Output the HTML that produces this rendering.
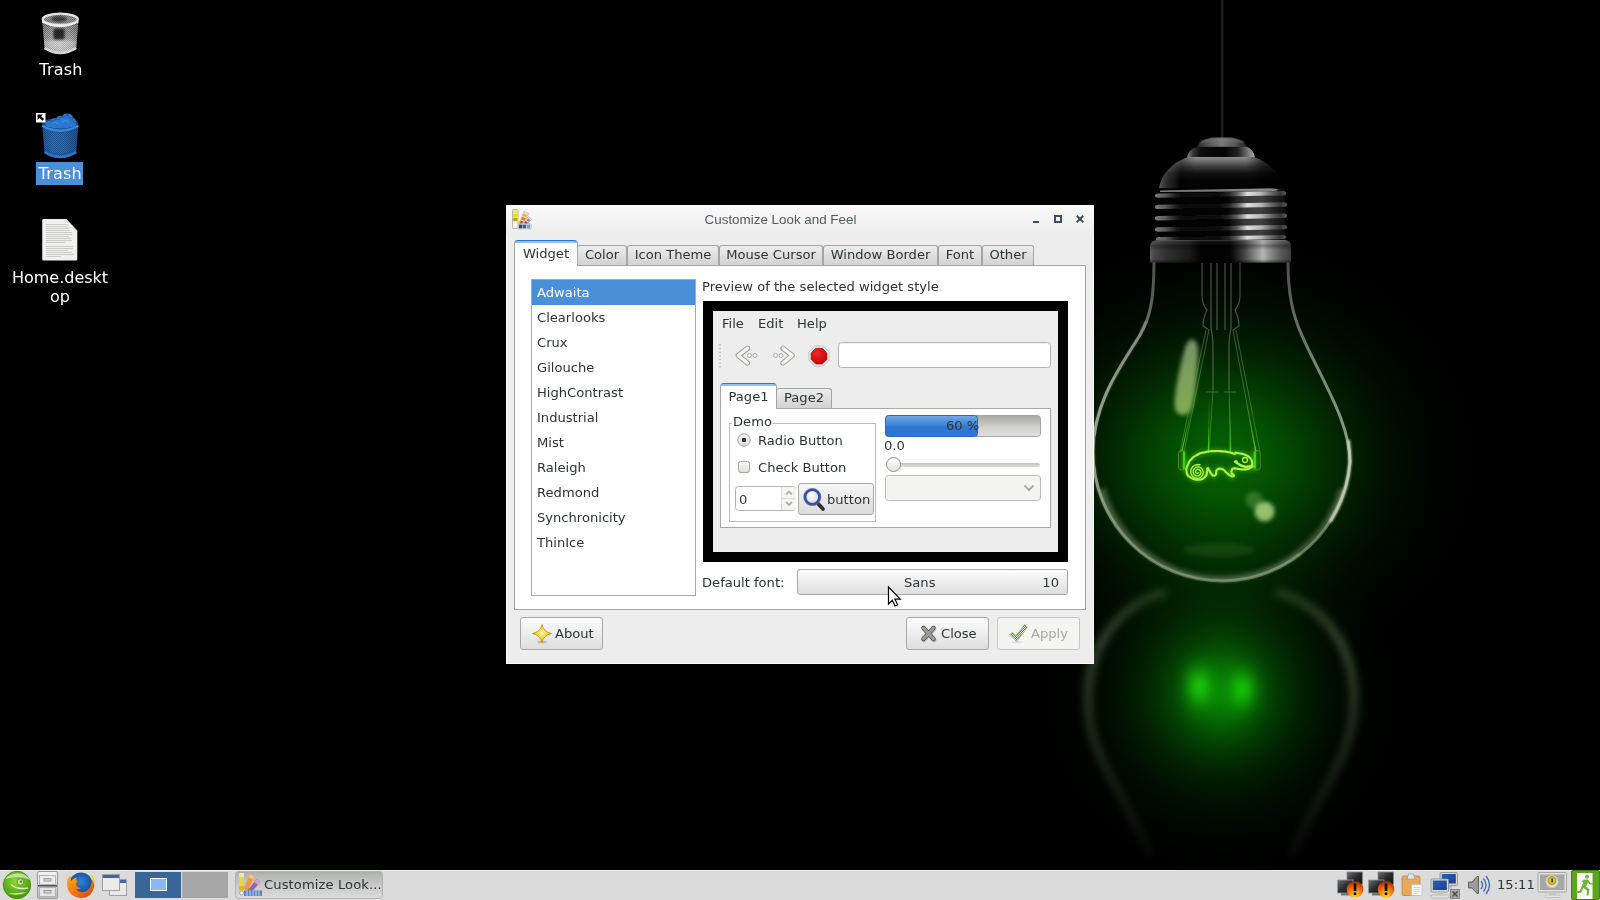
<!DOCTYPE html>
<html lang="en">
<head>
<meta charset="utf-8">
<title>Customize Look and Feel</title>
<style>
html,body{margin:0;padding:0;background:#000;}
body{width:1600px;height:900px;overflow:hidden;position:relative;font-family:"DejaVu Sans","Liberation Sans",sans-serif;font-size:13.1px;color:#2e3436;}
.abs{position:absolute;}
#wall{position:absolute;left:0;top:0;width:1600px;height:900px;}
.dlabel{will-change:transform;position:absolute;color:#fff;font-size:16px;text-align:center;line-height:19px;white-space:nowrap;}
/* window */
#win{will-change:transform;position:absolute;left:506px;top:205px;width:588px;height:459px;background:#ededed;box-sizing:border-box;box-shadow:inset 1px 1px 0 #fbfbfb,inset -1px -1px 0 #f8f8f8;}
#title{position:absolute;left:0;top:0;width:588px;height:29px;background:linear-gradient(#fafafa,#ededed);}
#title .t{position:absolute;left:2px;width:545px;top:7px;text-align:center;font-family:"Liberation Sans","DejaVu Sans",sans-serif;font-size:13.4px;color:#4f5d62;line-height:16px;}
.tab{position:absolute;top:40px;height:20px;box-sizing:border-box;border:1px solid #a2a6a2;border-bottom:none;border-radius:3px 3px 0 0;background:linear-gradient(#ededed,#d2d2d2);line-height:18px;text-align:center;white-space:nowrap;}
.tab.act{top:35px;height:26px;background:linear-gradient(#93c1f3 0,#93c1f3 2px,#fff 2px);border-color:#a2a6a2;border-top:1px solid #2a76d2;line-height:26px;z-index:2;border-radius:4px 4px 0 0;}
#pane{position:absolute;left:8px;top:60px;width:572px;height:345px;background:#fff;border:1px solid #a2a6a2;box-sizing:border-box;}
#list{position:absolute;left:25px;top:74px;width:165px;height:317px;border:1px solid #a8a8a8;background:#fff;box-sizing:border-box;}
#list div{height:25px;line-height:25px;padding-left:5px;white-space:nowrap;}
#list div.sel{background:#4a90d9;color:#fff;}
.btn{position:absolute;box-sizing:border-box;border:1px solid #a8a8a8;border-radius:3px;background:linear-gradient(#fcfcfc,#dedede);white-space:nowrap;}
.txt{position:absolute;white-space:nowrap;line-height:16px;}
/* preview */
#pv{position:absolute;left:197px;top:96px;width:365px;height:261px;background:#000;}
#pvi{position:absolute;left:10px;top:10px;width:345px;height:241px;background:#ededed;}
/* panel */
#panel{will-change:transform;position:absolute;left:0;top:870px;width:1600px;height:30px;background:#dbdbdb;box-shadow:inset 0 1px 0 #e9e9e9;}
</style>
</head>
<body>
<!--WALL-->
<svg id="wall" width="1600" height="900" viewBox="0 0 1600 900">
<defs>
 <radialGradient id="gExt">
  <stop offset="0.0" stop-color="#055f03"/>
  <stop offset="0.1" stop-color="#055b03"/>
  <stop offset="0.2" stop-color="#044f02"/>
  <stop offset="0.3" stop-color="#033f02"/>
  <stop offset="0.4" stop-color="#022e01"/>
  <stop offset="0.5" stop-color="#021f01"/>
  <stop offset="0.6" stop-color="#011301"/>
  <stop offset="0.7" stop-color="#010a00"/>
  <stop offset="0.8" stop-color="#000500"/>
  <stop offset="0.9" stop-color="#000200"/>
  <stop offset="1.0" stop-color="#000000"/>
 </radialGradient>
 <linearGradient id="gEdge" x1="0" y1="262" x2="0" y2="581" gradientUnits="userSpaceOnUse">
  <stop offset="0" stop-color="#8a8f88" stop-opacity="0.55"/>
  <stop offset="0.3" stop-color="#9aa593" stop-opacity="0.75"/>
  <stop offset="0.6" stop-color="#aebd9f" stop-opacity="0.8"/>
  <stop offset="1" stop-color="#7f9a6c" stop-opacity="0.55"/>
 </linearGradient>
 <linearGradient id="gCap" x1="1150" y1="0" x2="1291" y2="0" gradientUnits="userSpaceOnUse">
  <stop offset="0" stop-color="#5e5e5e"/>
  <stop offset="0.03" stop-color="#464646"/>
  <stop offset="0.12" stop-color="#303030"/>
  <stop offset="0.28" stop-color="#1a1a1a"/>
  <stop offset="0.36" stop-color="#030303"/>
  <stop offset="0.57" stop-color="#030303"/>
  <stop offset="0.66" stop-color="#3c3c3c"/>
  <stop offset="0.75" stop-color="#8c8c8c"/>
  <stop offset="0.8" stop-color="#b6b6b6"/>
  <stop offset="0.85" stop-color="#8c8c8c"/>
  <stop offset="0.93" stop-color="#585858"/>
  <stop offset="1" stop-color="#3c3c3c"/>
 </linearGradient>
 <linearGradient id="gDome" x1="0" y1="157" x2="0" y2="190" gradientUnits="userSpaceOnUse">
  <stop offset="0" stop-color="#8e8e8e"/>
  <stop offset="0.12" stop-color="#707070"/>
  <stop offset="0.3" stop-color="#3a3a3a"/>
  <stop offset="0.5" stop-color="#121212"/>
  <stop offset="0.7" stop-color="#040404"/>
  <stop offset="1" stop-color="#020202"/>
 </linearGradient>
 <linearGradient id="gThr" x1="1155" y1="0" x2="1287" y2="0" gradientUnits="userSpaceOnUse">
  <stop offset="0" stop-color="#7a7a7a"/>
  <stop offset="0.08" stop-color="#585858"/>
  <stop offset="0.16" stop-color="#1c1c1c"/>
  <stop offset="0.22" stop-color="#080808"/>
  <stop offset="0.48" stop-color="#0a0a0a"/>
  <stop offset="0.56" stop-color="#262626"/>
  <stop offset="0.63" stop-color="#6a6a6a"/>
  <stop offset="0.7" stop-color="#dedede"/>
  <stop offset="0.8" stop-color="#b8b8b8"/>
  <stop offset="0.88" stop-color="#6a6a6a"/>
  <stop offset="0.95" stop-color="#383838"/>
  <stop offset="1" stop-color="#5a5a5a"/>
 </linearGradient>
 <linearGradient id="gThrB" x1="1155" y1="0" x2="1287" y2="0" gradientUnits="userSpaceOnUse">
  <stop offset="0.55" stop-color="#030303"/>
  <stop offset="0.68" stop-color="#3a3a3a"/>
  <stop offset="0.8" stop-color="#404040"/>
  <stop offset="0.92" stop-color="#1c1c1c"/>
  <stop offset="1" stop-color="#0a0a0a"/>
 </linearGradient>
 <radialGradient id="gRef">
  <stop offset="0.0" stop-color="#0dff08" stop-opacity="0.3059"/>
  <stop offset="0.1" stop-color="#0dff08" stop-opacity="0.2924"/>
  <stop offset="0.2" stop-color="#0dff08" stop-opacity="0.2555"/>
  <stop offset="0.3" stop-color="#0dff08" stop-opacity="0.2040"/>
  <stop offset="0.4" stop-color="#0dff08" stop-opacity="0.1489"/>
  <stop offset="0.5" stop-color="#0dff08" stop-opacity="0.0993"/>
  <stop offset="0.6" stop-color="#0dff08" stop-opacity="0.0605"/>
  <stop offset="0.7" stop-color="#0dff08" stop-opacity="0.0337"/>
  <stop offset="0.8" stop-color="#0dff08" stop-opacity="0.0172"/>
  <stop offset="0.9" stop-color="#0dff08" stop-opacity="0.0080"/>
  <stop offset="1.0" stop-color="#0dff08" stop-opacity="0.0000"/>
 </radialGradient>
 <radialGradient id="gRefM">
  <stop offset="0.0" stop-color="#0dff08" stop-opacity="0.2157"/>
  <stop offset="0.1" stop-color="#0dff08" stop-opacity="0.2062"/>
  <stop offset="0.2" stop-color="#0dff08" stop-opacity="0.1802"/>
  <stop offset="0.3" stop-color="#0dff08" stop-opacity="0.1439"/>
  <stop offset="0.4" stop-color="#0dff08" stop-opacity="0.1050"/>
  <stop offset="0.5" stop-color="#0dff08" stop-opacity="0.0700"/>
  <stop offset="0.6" stop-color="#0dff08" stop-opacity="0.0427"/>
  <stop offset="0.7" stop-color="#0dff08" stop-opacity="0.0238"/>
  <stop offset="0.8" stop-color="#0dff08" stop-opacity="0.0121"/>
  <stop offset="0.9" stop-color="#0dff08" stop-opacity="0.0056"/>
  <stop offset="1.0" stop-color="#0dff08" stop-opacity="0.0000"/>
 </radialGradient>
 <radialGradient id="gBlob">
  <stop offset="0.0" stop-color="#38ff10" stop-opacity="0.3137"/>
  <stop offset="0.1" stop-color="#38ff10" stop-opacity="0.2999"/>
  <stop offset="0.2" stop-color="#38ff10" stop-opacity="0.2620"/>
  <stop offset="0.3" stop-color="#38ff10" stop-opacity="0.2092"/>
  <stop offset="0.4" stop-color="#38ff10" stop-opacity="0.1527"/>
  <stop offset="0.5" stop-color="#38ff10" stop-opacity="0.1019"/>
  <stop offset="0.6" stop-color="#38ff10" stop-opacity="0.0621"/>
  <stop offset="0.7" stop-color="#38ff10" stop-opacity="0.0346"/>
  <stop offset="0.8" stop-color="#38ff10" stop-opacity="0.0176"/>
  <stop offset="0.9" stop-color="#38ff10" stop-opacity="0.0082"/>
  <stop offset="1.0" stop-color="#38ff10" stop-opacity="0.0000"/>
 </radialGradient>
 <linearGradient id="gNub" x1="1197" y1="0" x2="1247" y2="0" gradientUnits="userSpaceOnUse">
  <stop offset="0" stop-color="#2a2a2a"/><stop offset="0.25" stop-color="#5a5a5a"/><stop offset="0.5" stop-color="#787878"/><stop offset="0.75" stop-color="#585858"/><stop offset="1" stop-color="#1c1c1c"/>
 </linearGradient>
 <linearGradient id="gCap2" x1="1187" y1="0" x2="1255" y2="0" gradientUnits="userSpaceOnUse">
  <stop offset="0" stop-color="#8a8a8a"/><stop offset="0.08" stop-color="#3a3a3a"/><stop offset="0.2" stop-color="#0c0c0c"/><stop offset="0.55" stop-color="#050505"/><stop offset="0.75" stop-color="#222"/><stop offset="0.9" stop-color="#777"/><stop offset="1" stop-color="#b0b0b0"/>
 </linearGradient>
 <linearGradient id="gDomeH" x1="1158" y1="0" x2="1284" y2="0" gradientUnits="userSpaceOnUse">
  <stop offset="0" stop-color="#999" stop-opacity="0.6"/><stop offset="0.08" stop-color="#777" stop-opacity="0.3"/><stop offset="0.18" stop-color="#000" stop-opacity="0.35"/><stop offset="0.3" stop-color="#000" stop-opacity="0"/><stop offset="0.7" stop-color="#000" stop-opacity="0"/><stop offset="0.82" stop-color="#000" stop-opacity="0.55"/><stop offset="1" stop-color="#000" stop-opacity="0.85"/>
 </linearGradient>
 <linearGradient id="gColV" x1="0" y1="240" x2="0" y2="262.500" gradientUnits="userSpaceOnUse">
  <stop offset="0" stop-color="#aaa" stop-opacity="0.35"/><stop offset="0.1" stop-color="#555" stop-opacity="0.1"/><stop offset="0.25" stop-color="#000" stop-opacity="0.3"/><stop offset="0.45" stop-color="#000" stop-opacity="0"/><stop offset="0.85" stop-color="#000" stop-opacity="0"/><stop offset="1" stop-color="#000" stop-opacity="0.5"/>
 </linearGradient>
 <linearGradient id="gArc" x1="0" y1="590" x2="0" y2="860" gradientUnits="userSpaceOnUse"><stop offset="0" stop-color="#7e9a6c" stop-opacity="0.3"/><stop offset="0.2" stop-color="#7e9a6c" stop-opacity="0.5"/><stop offset="0.55" stop-color="#7e9a6c" stop-opacity="0.3"/><stop offset="1" stop-color="#7e9a6c" stop-opacity="0.05"/></linearGradient>
 <filter id="b05" x="-10%" y="-50%" width="120%" height="200%"><feGaussianBlur stdDeviation="0.6"/></filter>
 <linearGradient id="gHi" x1="0" y1="339" x2="0" y2="416" gradientUnits="userSpaceOnUse"><stop offset="0" stop-color="#80a070" stop-opacity="0.9"/><stop offset="0.5" stop-color="#84a660" stop-opacity="0.95"/><stop offset="1" stop-color="#86ae54" stop-opacity="0.97"/></linearGradient>
 <linearGradient id="gWire" x1="0" y1="398" x2="0" y2="452" gradientUnits="userSpaceOnUse"><stop offset="0" stop-color="#4ed010" stop-opacity="0"/><stop offset="0.6" stop-color="#4ed010" stop-opacity="0.45"/><stop offset="1" stop-color="#58e018" stop-opacity="0.95"/></linearGradient>
 <filter id="b1" x="-50%" y="-50%" width="200%" height="200%"><feGaussianBlur stdDeviation="1"/></filter>
 <filter id="b2" x="-50%" y="-50%" width="200%" height="200%"><feGaussianBlur stdDeviation="2.2"/></filter>
 <filter id="b4" x="-50%" y="-50%" width="200%" height="200%"><feGaussianBlur stdDeviation="4"/></filter>
 <filter id="b5" x="-50%" y="-50%" width="200%" height="200%"><feGaussianBlur stdDeviation="5"/></filter>
 <filter id="b12" filterUnits="userSpaceOnUse" x="1000" y="180" width="460" height="480"><feGaussianBlur stdDeviation="13"/></filter>
 <filter id="b7" x="-100%" y="-100%" width="300%" height="300%"><feGaussianBlur stdDeviation="7.5"/></filter>
 <filter id="b8" x="-50%" y="-50%" width="200%" height="200%"><feGaussianBlur stdDeviation="8"/></filter>
 <clipPath id="cBulb"><path d="M1154,262 C1154,300 1150,318 1140,335 C1125,360 1093,400 1093,452 A129,129 0 0 0 1222,581 A129,129 0 0 0 1350,462 C1350,422 1322,380.600 1302,335.600 C1293,315.600 1288,295 1288,262 Z"/></clipPath>
</defs>
<rect width="1600" height="900" fill="#000"/>
<!-- outer glow -->
<ellipse cx="1225" cy="460" rx="255" ry="228" fill="url(#gExt)"/>
<!-- reflection glow -->
<ellipse cx="1221" cy="695" rx="180" ry="180" fill="url(#gRef)" style="mix-blend-mode:plus-lighter"/>
<ellipse cx="1221" cy="692" rx="84" ry="84" fill="url(#gRefM)" style="mix-blend-mode:plus-lighter"/>
<ellipse cx="1198" cy="686" rx="27" ry="39" fill="url(#gBlob)" style="mix-blend-mode:plus-lighter"/>
<ellipse cx="1243.500" cy="689" rx="27" ry="39" fill="url(#gBlob)" fill-opacity="0.92" style="mix-blend-mode:plus-lighter"/>
<path d="M1166,592 C1122,603 1088,642 1088,700 C1088,760 1125,790 1150,856" fill="none" stroke="url(#gArc)" stroke-width="7" filter="url(#b4)"/>
<path d="M1276,592 C1320,603 1354,642 1354,700 C1354,760 1317,790 1292,856" fill="none" stroke="url(#gArc)" stroke-width="7" filter="url(#b4)"/>

<!-- wire -->
<rect x="1220.800" y="0" width="2.800" height="139" fill="#1c1c1c"/>
<!-- bulb glass -->

<path d="M1154,262 C1154,300 1150,318 1140,335 C1125,360 1093,400 1093,452 A129,129 0 0 0 1222,581 A129,129 0 0 0 1350,462 C1350,422 1322,380.600 1302,335.600 C1293,315.600 1288,295 1288,262" fill="none" stroke="url(#gEdge)" stroke-width="3"/>
<path d="M1146,321 C1143,328 1141,332 1140,335 C1125,360 1098,398 1094,436" fill="none" stroke="#c0c8b8" stroke-opacity="0.5" stroke-width="2" filter="url(#b1)"/>
<g clip-path="url(#cBulb)"><path d="M1098,490 A129,129 0 0 0 1346,490" fill="none" stroke="#8fa482" stroke-opacity="0.42" stroke-width="15" filter="url(#b2)"/></g>
<path d="M1348.500,440 Q1350,452 1350,462 A129,129 0 0 1 1330,522" fill="none" stroke="#dce4c8" stroke-opacity="0.75" stroke-width="3.600" filter="url(#b1)"/>
<path d="M1093.300,438 L1093,452 A129,129 0 0 0 1222,581 A129,129 0 0 0 1300,554" fill="none" stroke="#b4c4a4" stroke-opacity="0.35" stroke-width="3" filter="url(#b1)"/>
<!--BULBDETAIL-->
<!-- glass highlights -->
<path d="M1192,339.500 C1197.500,339.500 1199,348 1197.500,364 C1196,384 1195,400 1191,410 C1187,417.500 1176.500,416.500 1175,408 C1173.500,396 1180,366 1184.500,350 C1186.500,343 1189,339.500 1192,339.500 Z" fill="url(#gHi)" filter="url(#b2)"/>
<circle cx="1254" cy="500" r="8.500" fill="#8fc070" fill-opacity="0.32" filter="url(#b2)"/>
<circle cx="1264.500" cy="511.500" r="10" fill="#a8d080" fill-opacity="0.88" filter="url(#b2)"/>
<ellipse cx="1219" cy="550" rx="36" ry="7" fill="#4f8a3a" fill-opacity="0.2" filter="url(#b2)"/>
<!-- stem / filament supports -->
<g fill="none" stroke="#7f8f78" stroke-opacity="0.55" stroke-width="1.2">
 <path d="M1202,263 L1202,296 Q1202,304 1207,310 Q1203,318 1203,326 L1209,330"/>
 <path d="M1240,263 L1240,296 Q1240,304 1235,310 Q1239,318 1239,326 L1233,330"/>
 <path d="M1211,263 L1211,328 Q1213,336 1213,350 L1213,390"/>
 <path d="M1231,263 L1231,328 Q1229,336 1229,350 L1229,390"/>
 <path d="M1217,263 L1217,330"/><path d="M1225,263 L1225,330"/>
</g>
<g fill="none" stroke="#6aa44e" stroke-opacity="0.5" stroke-width="1">
 <path d="M1209,330 L1184,452"/><path d="M1206,330 L1180,452"/>
 <path d="M1233,330 L1256,452"/><path d="M1236,330 L1260,452"/>
 <path d="M1213,390 L1209,452"/><path d="M1229,390 L1231,452"/>
 <path d="M1206,392 h12 M1224,392 h12"/>
</g>
<!-- chameleon -->
<g fill="none" stroke-linecap="round" stroke-linejoin="round">
 <g stroke="#5ce010" stroke-opacity="0.42" stroke-width="4.500" filter="url(#b2)">
  <path d="M1186.56,471.88 C1185.73,467.50 1186.56,468.54 1188.12,464.38 C1189.69,460.21 1188.33,462.50 1191.25,459.38 C1194.17,456.25 1192.29,457.40 1196.88,455.00 C1201.46,452.60 1199.38,453.48 1205.00,452.19 C1210.62,450.90 1207.71,451.40 1213.75,451.12 C1219.79,450.85 1217.71,450.92 1223.12,451.38 C1228.54,451.83 1226.15,451.71 1230.00,452.50 C1233.85,453.29 1232.81,453.71 1234.69,453.75 C1236.56,453.79 1234.79,452.88 1235.62,452.62 C1236.46,452.38 1235.10,452.62 1237.19,453.00 C1239.27,453.38 1238.65,452.88 1241.88,453.75 C1245.10,454.62 1243.96,453.96 1246.88,455.62 C1249.79,457.29 1248.85,456.46 1250.62,458.75 C1252.40,461.04 1251.77,460.21 1252.19,462.50 C1252.60,464.79 1252.60,463.75 1251.88,465.62 C1251.15,467.50 1252.29,466.88 1250.00,468.12 C1247.71,469.38 1248.75,469.06 1245.00,469.38 C1241.25,469.69 1242.50,469.38 1238.75,469.06 C1235.00,468.75 1236.04,468.12 1233.75,468.44 C1231.46,468.75 1232.60,468.44 1231.88,470.00 C1231.15,471.56 1230.94,471.46 1231.56,473.12 C1232.19,474.79 1233.44,473.92 1233.75,475.00 C1234.06,476.08 1233.96,476.38 1232.50,476.38 C1231.04,476.38 1231.46,476.29 1229.38,475.00 C1227.29,473.71 1228.12,474.17 1226.25,472.50 C1224.38,470.83 1225.62,471.25 1223.75,470.00 C1221.88,468.75 1222.71,468.96 1220.62,468.75 C1218.54,468.54 1218.96,468.33 1217.50,469.38 C1216.04,470.42 1216.77,470.21 1216.25,471.88 C1215.73,473.54 1216.77,473.08 1215.94,474.38 C1215.10,475.67 1215.31,475.96 1213.75,475.75 C1212.19,475.54 1212.71,475.46 1211.25,473.75 C1209.79,472.04 1210.62,472.50 1209.38,470.62 C1208.12,468.75 1208.29,467.71 1207.50,468.12 C1206.71,468.54 1207.83,468.96 1207.00,471.88 C1206.17,474.79 1207.96,474.27 1205.00,476.88 C1202.04,479.48 1202.92,479.48 1198.12,479.69 C1193.33,479.90 1194.48,480.10 1190.62,477.50 C1186.77,474.90 1187.40,476.25 1186.56,471.88 Z"/>
  <circle cx="1197.6" cy="472.0" r="4.500"/>
  <path d="M1183.800,452 v17 M1254.800,452 v17"/>
 </g>
 <g stroke="url(#gWire)" stroke-width="1.200">
  <path d="M1209.300,400 L1208.400,452.300 M1229.600,400 L1230.300,452.600"/>
  <path d="M1193.500,400 L1182,450.600 M1246,400 L1255.600,450.600"/>
 </g>
 <g stroke="#aef444" stroke-width="2.100">
  <path d="M1186.56,471.88 C1185.73,467.50 1186.56,468.54 1188.12,464.38 C1189.69,460.21 1188.33,462.50 1191.25,459.38 C1194.17,456.25 1192.29,457.40 1196.88,455.00 C1201.46,452.60 1199.38,453.48 1205.00,452.19 C1210.62,450.90 1207.71,451.40 1213.75,451.12 C1219.79,450.85 1217.71,450.92 1223.12,451.38 C1228.54,451.83 1226.15,451.71 1230.00,452.50 C1233.85,453.29 1232.81,453.71 1234.69,453.75 C1236.56,453.79 1234.79,452.88 1235.62,452.62 C1236.46,452.38 1235.10,452.62 1237.19,453.00 C1239.27,453.38 1238.65,452.88 1241.88,453.75 C1245.10,454.62 1243.96,453.96 1246.88,455.62 C1249.79,457.29 1248.85,456.46 1250.62,458.75 C1252.40,461.04 1251.77,460.21 1252.19,462.50 C1252.60,464.79 1252.60,463.75 1251.88,465.62 C1251.15,467.50 1252.29,466.88 1250.00,468.12 C1247.71,469.38 1248.75,469.06 1245.00,469.38 C1241.25,469.69 1242.50,469.38 1238.75,469.06 C1235.00,468.75 1236.04,468.12 1233.75,468.44 C1231.46,468.75 1232.60,468.44 1231.88,470.00 C1231.15,471.56 1230.94,471.46 1231.56,473.12 C1232.19,474.79 1233.44,473.92 1233.75,475.00 C1234.06,476.08 1233.96,476.38 1232.50,476.38 C1231.04,476.38 1231.46,476.29 1229.38,475.00 C1227.29,473.71 1228.12,474.17 1226.25,472.50 C1224.38,470.83 1225.62,471.25 1223.75,470.00 C1221.88,468.75 1222.71,468.96 1220.62,468.75 C1218.54,468.54 1218.96,468.33 1217.50,469.38 C1216.04,470.42 1216.77,470.21 1216.25,471.88 C1215.73,473.54 1216.77,473.08 1215.94,474.38 C1215.10,475.67 1215.31,475.96 1213.75,475.75 C1212.19,475.54 1212.71,475.46 1211.25,473.75 C1209.79,472.04 1210.62,472.50 1209.38,470.62 C1208.12,468.75 1208.29,467.71 1207.50,468.12 C1206.71,468.54 1207.83,468.96 1207.00,471.88 C1206.17,474.79 1207.96,474.27 1205.00,476.88 C1202.04,479.48 1202.92,479.48 1198.12,479.69 C1193.33,479.90 1194.48,480.10 1190.62,477.50 C1186.77,474.90 1187.40,476.25 1186.56,471.88 Z"/>
  <path d="M1198.41,472.59 L1198.28,472.88 L1198.05,473.13 L1197.73,473.32 L1197.33,473.41 L1196.90,473.38 L1196.46,473.21 L1196.08,472.90 L1195.78,472.47 L1195.61,471.94 L1195.60,471.35 L1195.77,470.76 L1196.12,470.21 L1196.63,469.77 L1197.28,469.48 L1198.01,469.38 L1198.78,469.50 L1199.50,469.85 L1200.12,470.40 L1200.57,471.14 L1200.80,472.00 L1200.78,472.92 L1200.49,473.83 L1199.93,474.65 L1199.15,475.29 L1198.19,475.70 L1197.12,475.83 L1196.02,475.64 L1195.00,475.14 L1194.13,474.36 L1193.51,473.33 L1193.19,472.14 L1193.22,470.88 L1193.61,469.64 L1194.36,468.54 L1195.40,467.68 L1196.67,467.13 L1198.08,466.95 L1199.51,467.18 L1200.84,467.82 L1201.97,468.83 L1202.78,470.13 L1203.21,471.65 L1203.19,473.25 L1202.72,474.81 L1201.81,476.21 L1200.52,477.31 L1198.95,478.02 L1197.21,478.27 L1195.44,478.01 L1193.78,477.26 L1192.38,476.05 L1191.35,474.47 L1190.80,472.64 L1190.78,470.70 L1191.32,468.80 L1192.38,467.10 L1193.90,465.74 L1195.76,464.85 L1197.84,464.51 L1199.95,464.77" stroke-width="1.300"/>
  <path d="M1236.56,461.56 C1232.40,461.25 1236.98,462.81 1239.38,464.38 C1241.77,465.94 1240.83,465.52 1243.75,466.25 C1246.67,466.98 1245.42,466.88 1248.12,466.56 C1250.83,466.25 1255.73,466.98 1251.88,465.31" stroke-width="2.400"/>
  <circle cx="1245" cy="460" r="2.500" stroke-width="1.300"/>
 </g>
 <g stroke="#6a9a3a" stroke-width="0.900" stroke-opacity="0.8">
  <rect x="1178.500" y="450.600" width="6.500" height="19.400" rx="3"/>
  <rect x="1253.800" y="450.600" width="6.500" height="19.400" rx="3"/>
 </g>
 <g stroke="#38e010" stroke-width="2" stroke-opacity="0.95">
  <path d="M1183.900,452.500 V468 M1254.900,452.500 V468"/>
 </g>
</g>
<!--/BULBDETAIL-->
<!-- cap -->
<path d="M1197,147.500 Q1199,139.500 1212,137.500 L1232,137.500 Q1245,139.500 1247,147.500 Z" fill="url(#gNub)"/>
<path d="M1200,141.800 Q1222,139 1244,141.800" fill="none" stroke="#8a8a8a" stroke-opacity="0.7" stroke-width="1.200" filter="url(#b1)"/>
<path d="M1187,157.500 Q1189,149 1197,146.800 L1247,146.800 Q1253,149 1255,157.500 Z" fill="url(#gCap2)"/>
<path d="M1158.500,190 Q1162,167 1188,157 L1254,157 Q1279,167 1283.500,190 Z" fill="url(#gDome)"/>
<path d="M1158.500,190 Q1162,167 1188,157 L1254,157 Q1279,167 1283.500,190 Z" fill="url(#gDomeH)"/>
<rect x="1156" y="188" width="130" height="53" rx="3" fill="#030303"/>
<rect x="1227" y="189" width="58" height="52" fill="url(#gThrB)"/>
<path d="M1160,190.500 L1270,188.200 q8,0 8,1.600 q0,1.400 -8,1.400 L1160,192 z" fill="#9a9a9a" fill-opacity="0.8" filter="url(#b05)"/>
<g fill="url(#gThr)" filter="url(#b05)">
 <path d="M1155,195.600 q0,-2.200 3,-2.200 L1283,191 q3,0 3,2.200 q0,2.200 -3,2.200 L1158,197.800 q-3,0 -3,-2.200 z"/>
 <path d="M1155,206.900 q0,-2.200 3,-2.200 L1284,202.300 q3,0 3,2.200 q0,2.200 -3,2.200 L1158,209.100 q-3,0 -3,-2.200 z"/>
 <path d="M1155,218.200 q0,-2.200 3,-2.200 L1284,213.600 q3,0 3,2.200 q0,2.200 -3,2.200 L1158,220.400 q-3,0 -3,-2.200 z"/>
 <path d="M1155,229.500 q0,-2.200 3,-2.200 L1284,224.900 q3,0 3,2.200 q0,2.200 -3,2.200 L1158,231.700 q-3,0 -3,-2.200 z"/>
 <path d="M1156,239 q0,-2 3,-2 L1283,235 q3,0 3,2 q0,2 -3,2 L1159,241 q-3,0 -3,-2 z"/>
</g>
<path d="M1150,262.500 L1150,246 Q1151,240 1158,240 L1284,240 Q1291,240 1291,246 L1291,262.500 Z" fill="url(#gCap)"/>
<path d="M1150,262.500 L1150,246 Q1151,240 1158,240 L1284,240 Q1291,240 1291,246 L1291,262.500 Z" fill="url(#gColV)"/>
</svg>
<!--/WALL-->

<!--ICONS-->
<svg class="abs" style="left:28px;top:4px" width="64" height="64" viewBox="28 4 64 64">
 <defs>
  <pattern id="mesh" width="2" height="2" patternUnits="userSpaceOnUse"><rect width="2" height="2" fill="#fff" fill-opacity="0"/><rect width="1" height="1" fill="#fff"/><rect x="1" y="1" width="1" height="1" fill="#fff"/></pattern>
  <linearGradient id="tb" x1="42" y1="0" x2="79" y2="0" gradientUnits="userSpaceOnUse"><stop offset="0" stop-color="#8a8a8a"/><stop offset="0.25" stop-color="#b4b4b4"/><stop offset="0.5" stop-color="#bdbdbd"/><stop offset="0.8" stop-color="#a8a8a8"/><stop offset="1" stop-color="#7a7a7a"/></linearGradient>
  <linearGradient id="tv" x1="0" y1="24" x2="0" y2="54" gradientUnits="userSpaceOnUse"><stop offset="0" stop-color="#000" stop-opacity="0.45"/><stop offset="0.5" stop-color="#000" stop-opacity="0.25"/><stop offset="0.62" stop-color="#000" stop-opacity="0"/><stop offset="1" stop-color="#000" stop-opacity="0.12"/></linearGradient>
  <filter id="ib" x="-30%" y="-30%" width="160%" height="160%"><feGaussianBlur stdDeviation="1.3"/></filter>
 </defs>
 <g id="trashcan">
  <path d="M42.300,21 L44.600,49 Q60,57.500 76.200,49 L78.300,21 Q60,30 42.300,21 Z" fill="url(#tb)"/>
  <path d="M42.300,21 L44.600,49 Q60,57.500 76.200,49 L78.300,21 Q60,30 42.300,21 Z" fill="url(#tv)"/>
  <path d="M42.300,21 L44.600,49 Q60,57.500 76.200,49 L78.300,21 Q60,30 42.300,21 Z" fill="url(#mesh)" fill-opacity="0.38"/>
  <rect x="53.500" y="28.500" width="11" height="11" rx="2" fill="#000" fill-opacity="0.75" filter="url(#ib)"/>
  <ellipse cx="60.300" cy="19.300" rx="17.600" ry="5.600" fill="#6e6e6e"/>
  <ellipse cx="60.300" cy="19.300" rx="17.600" ry="5.600" fill="url(#mesh)" fill-opacity="0.3"/>
  <ellipse cx="59" cy="19" rx="8" ry="3" fill="#000" fill-opacity="0.55" filter="url(#ib)"/>
  <ellipse cx="60.300" cy="19.300" rx="17.600" ry="5.600" fill="none" stroke="#e4e4e4" stroke-width="2.200"/>
  <path d="M42.200,21.500 Q60,31 78.400,21.500" fill="none" stroke="#f2f2f2" stroke-width="1.600"/>
  <path d="M44.600,48 Q60,58 76.200,48" fill="none" stroke="#d6d6d6" stroke-width="2.600"/>
 </g>
</svg>
<svg class="abs" style="left:28px;top:106px" width="64" height="64" viewBox="28 106 64 64">
 <defs>
  <linearGradient id="bb" x1="42" y1="0" x2="79" y2="0" gradientUnits="userSpaceOnUse"><stop offset="0" stop-color="#1c5aa2"/><stop offset="0.3" stop-color="#2a74c6"/><stop offset="0.6" stop-color="#2a70c0"/><stop offset="1" stop-color="#184f93"/></linearGradient>
  <pattern id="meshb" width="2" height="2" patternUnits="userSpaceOnUse"><rect width="1" height="1" fill="#0c2f5c"/><rect x="1" y="1" width="1" height="1" fill="#0c2f5c"/></pattern>
 </defs>
 <path d="M42.300,125 L44.600,153 Q60,161.500 76.200,153 L78.300,125 Q60,134 42.300,125 Z" fill="url(#bb)"/>
 <path d="M42.300,128 L44.600,153 Q60,161.500 76.200,153 L78.300,128 Q60,137 42.300,128 Z" fill="url(#meshb)" fill-opacity="0.5"/>
 <ellipse cx="60.300" cy="123.500" rx="17.600" ry="5.600" fill="#174e92"/>
 <path d="M45.500,124 Q46,120.500 50,121 Q51.500,117.500 56,118.500 Q58,115 62,116 Q64.500,112.500 68,113.800 Q72,113.500 73,117.500 Q76.500,119 76,123 Q77,125 75,126 Q60,132 45.500,126 Z" fill="#2b78cc"/>
 <path d="M50,121 Q54,122.500 56,118.500 Q58,122 62,116 Q63,120 68,113.800 Q67.500,119.500 73,117.500 Q70,121 76,123" fill="none" stroke="#1a559e" stroke-width="0.900"/>
 <path d="M52,123 Q56,120.500 58,124 M62,122 Q66,119 69,122.500" fill="none" stroke="#4a94e4" stroke-width="0.900"/>
 <path d="M42.700,123.500 A17.600,5.600 0 0 0 77.900,123.500" fill="none" stroke="#164a8c" stroke-width="1.200"/>
 <path d="M42.200,125.800 Q60,135.300 78.400,125.800" fill="none" stroke="#3a88dc" stroke-width="2.200"/>
 <path d="M42.600,128.300 Q60,137.600 78,128.300" fill="none" stroke="#174e92" stroke-width="0.900"/>
 <path d="M44.600,152 Q60,162 76.200,152" fill="none" stroke="#2c78cc" stroke-width="2.600"/>
 <path d="M44.300,149.700 Q60,159.500 76.500,149.700" fill="none" stroke="#174e92" stroke-width="0.800"/>
 <rect x="36" y="113" width="9.500" height="9.500" fill="#fff"/>
 <path d="M37.500,114.500 h5.500 l-1.800,1.800 l2.800,2.800 l-1.600,1.600 l-2.800,-2.800 l-2.100,2.100 z" fill="#000"/>
</svg>
<svg class="abs" style="left:28px;top:210px" width="64" height="64" viewBox="28 210 64 64">
 <path d="M43.500,219 H66 L77.300,231 V259 Q77.300,260.500 75.800,260.500 H43.500 Q42.200,260.500 42.200,259 V220.500 Q42.200,219 43.500,219 Z" fill="#f0f0ee"/>
 <path d="M66,219 Q69,222 68,227 Q73,226.500 77.300,231 Z" fill="#fff" stroke="#c9c9c7" stroke-width="0.600"/>
 <g stroke="#c6c6c4" stroke-width="0.900">
  <path d="M46,224.500h21M46,226.500h22M46,228.500h23M46,230.500h24M46,232.500h26M46,234.500h26M46,236.500h23M46,238.500h25M46,240.500h26M46,242.500h19"/>
  <path d="M46,246.500h27M46,248.500h27M46,250.500h22M46,252.500h26M46,254.500h28M46,256.500h15"/>
 </g>
</svg>
<div class="dlabel" style="left:11px;top:60px;width:100px;letter-spacing:0.2px;">Trash</div>
<div class="dlabel" style="left:36px;top:162px;width:47px;height:23px;line-height:23px;background:#4a90d9;letter-spacing:0.2px;text-indent:1.5px;">Trash</div>
<div class="dlabel" style="left:5px;top:268px;width:110px;">Home.deskt<br>op</div>
<!--/ICONS-->

<!--WIN-->
<div id="win">
 <div id="title"><div class="t">Customize Look and Feel</div>
 <svg class="abs" style="left:0;top:0" width="588" height="30" viewBox="506 205 588 30">
  <path d="M517.500,227.500 L524,211.500 L528.500,213.500 L522,228 Z" fill="#f0f0ec" stroke="#a8a8a0" stroke-width="0.700"/>
  <path d="M523.800,213.200 L527.200,214.700 L526,217.500 L522.600,216 Z" fill="#fcaf3e"/><path d="M522.300,216.800 L525.700,218.300 L524.500,221.100 L521.100,219.600 Z" fill="#f57900"/><path d="M520.800,220.400 L524.200,221.900 L523,224.700 L519.600,223.200 Z" fill="#ce5c00"/>
  <path d="M519,227.500 L528.500,216.500 L531.500,219.300 L522.500,229 Z" fill="#f0f0ec" stroke="#a8a8a0" stroke-width="0.700"/>
  <path d="M528.300,218 L530.400,219.900 L528.500,222 L526.400,220.100 Z" fill="#ad7fa8"/><path d="M525.800,220.800 L527.900,222.700 L526,224.800 L523.900,222.900 Z" fill="#75507b"/><path d="M523.300,223.600 L525.400,225.500 L523.800,227.200 L521.700,225.300 Z" fill="#5c3566"/>
  <rect x="518" y="223.800" width="13" height="5" rx="0.800" fill="#f0f0ec" stroke="#a8a8a0" stroke-width="0.700"/><rect x="519" y="224.600" width="3.300" height="3.600" fill="#204a87"/><rect x="522.800" y="224.600" width="3.300" height="3.600" fill="#3465a4"/><rect x="526.600" y="224.600" width="3.400" height="3.600" fill="#729fcf"/>
  <rect x="512.500" y="209.500" width="5.500" height="19" rx="0.800" fill="#f6f6f2" stroke="#a8a8a0" stroke-width="0.800"/>
  <rect x="513.200" y="210.500" width="4.200" height="3" fill="#f0e04a"/><rect x="513.200" y="214" width="4.200" height="3.500" fill="#ecd800"/><rect x="513.200" y="218" width="4.200" height="3.200" fill="#c8a400"/>
  <rect x="1033" y="221" width="6" height="2" fill="#3c505a"/>
  <rect x="1055" y="216" width="6" height="6" fill="none" stroke="#3c505a" stroke-width="2"/>
  <path d="M1076.700,215.700 L1083.300,222.300 M1083.300,215.700 L1076.700,222.300" stroke="#3c505a" stroke-width="2"/>
 </svg></div>
 <div id="pane"></div>
 <div class="tab act" style="left:8px;width:64px;">Widget</div>
 <div class="tab" style="left:71px;width:50px;">Color</div>
 <div class="tab" style="left:121px;width:92px;">Icon Theme</div>
 <div class="tab" style="left:213px;width:104px;">Mouse Cursor</div>
 <div class="tab" style="left:317px;width:115px;">Window Border</div>
 <div class="tab" style="left:432px;width:44px;">Font</div>
 <div class="tab" style="left:476px;width:52px;">Other</div>
 <div id="list">
  <div class="sel">Adwaita</div><div>Clearlooks</div><div>Crux</div><div>Gilouche</div><div>HighContrast</div><div>Industrial</div><div>Mist</div><div>Raleigh</div><div>Redmond</div><div>Synchronicity</div><div>ThinIce</div>
 </div>
 <div class="txt" style="left:196px;top:74px;">Preview of the selected widget style</div>
 <div id="pv"><div id="pvi">
 <!--PV-->
 <!-- coords relative to pvi origin (713,311) -->
 <div class="txt" style="left:9px;top:5px;">File</div>
 <div class="txt" style="left:45px;top:5px;">Edit</div>
 <div class="txt" style="left:84px;top:5px;">Help</div>
 <svg class="abs" style="left:0;top:28px" width="345" height="34" viewBox="713 339 345 34">
  <defs>
   <linearGradient id="arw" x1="0" y1="0" x2="0" y2="1"><stop offset="0" stop-color="#ffffff"/><stop offset="1" stop-color="#d6d6d2"/></linearGradient>
   <radialGradient id="stp" cx="0.4" cy="0.3" r="0.8"><stop offset="0" stop-color="#ef2929"/><stop offset="1" stop-color="#c00000"/></radialGradient>
  </defs>
  <path d="M720,344v1.600M720,347.700v1.600M720,351.400v1.600M720,355v1.600M720,358.700v1.600M720,362.400v1.600M720,366v1.600" stroke="#c6c6be" stroke-width="1.800"/>
  <!-- back -->
  <path d="M747.500,348.300 L738.300,355.500 L747.500,363" fill="none" stroke="#a2a29e" stroke-width="5.400" stroke-linecap="round" stroke-linejoin="round"/>
  <path d="M747.500,348.300 L738.300,355.500 L747.500,363" fill="none" stroke="#f8f8f6" stroke-width="3.200" stroke-linecap="round" stroke-linejoin="round"/>
  <circle cx="749.500" cy="355.500" r="2" fill="#f4f4f2" stroke="#a2a29e" stroke-width="0.900"/><circle cx="755" cy="355.500" r="2" fill="#f4f4f2" stroke="#a2a29e" stroke-width="0.900"/>
  <!-- forward -->
  <path d="M783,348.300 L792.200,355.500 L783,363" fill="none" stroke="#a2a29e" stroke-width="5.400" stroke-linecap="round" stroke-linejoin="round"/>
  <path d="M783,348.300 L792.200,355.500 L783,363" fill="none" stroke="#f8f8f6" stroke-width="3.200" stroke-linecap="round" stroke-linejoin="round"/>
  <circle cx="775.500" cy="355.500" r="2" fill="#f4f4f2" stroke="#a2a29e" stroke-width="0.900"/><circle cx="781" cy="355.500" r="2" fill="#f4f4f2" stroke="#a2a29e" stroke-width="0.900"/>
  <!-- stop -->
  <path d="M814.800,346 h8.400 l5.900,5.900 v8.400 l-5.900,5.900 h-8.400 l-5.900,-5.900 v-8.400 z" fill="#f2f2f0" stroke="#bdbdb8" stroke-width="0.900"/>
  <path d="M815.700,348.300 h6.600 l4.600,4.600 v6.600 l-4.600,4.600 h-6.600 l-4.600,-4.600 v-6.600 z" fill="url(#stp)" stroke="#a40000" stroke-width="0.600"/>
 </svg>
 <div class="abs" style="left:125px;top:31px;width:213px;height:26px;box-sizing:border-box;background:#fff;border:1px solid #b4b4b0;border-radius:3.5px;box-shadow:inset 0 1px 1px rgba(0,0,0,0.06);"></div>
 <!-- notebook -->
 <div class="abs" style="left:7px;top:97px;width:331px;height:120px;box-sizing:border-box;background:#fff;border:1px solid #a8a8a6;"></div>
 <div class="tab" style="left:63px;top:77px;height:20px;width:56px;line-height:17px;">Page2</div>
 <div class="tab act" style="left:7px;top:72px;height:26px;width:57px;line-height:26px;">Page1</div>
 <!-- frame -->
 <div class="abs" style="left:16px;top:112px;width:147px;height:99px;box-sizing:border-box;border:1px solid #bcbcb8;"></div>
 <div class="txt" style="left:19px;top:103px;background:#fff;padding:0 1px;">Demo</div>
 <svg class="abs" style="left:22px;top:120px" width="20" height="48" viewBox="735 431 20 48">
  <defs><linearGradient id="rb" x1="0" y1="0" x2="0" y2="1"><stop offset="0" stop-color="#fdfdfd"/><stop offset="1" stop-color="#dcdcda"/></linearGradient></defs>
  <circle cx="744" cy="440" r="6.200" fill="url(#rb)" stroke="#9a9a96" stroke-width="1"/><circle cx="744" cy="440" r="2.300" fill="#2e3436"/>
  <rect x="738.500" y="461.500" width="11" height="11" rx="2" fill="url(#rb)" stroke="#a2a29e" stroke-width="1"/>
 </svg>
 <div class="txt" style="left:45px;top:122px;">Radio Button</div>
 <div class="txt" style="left:45px;top:149px;">Check Button</div>
 <!-- spin -->
 <div class="abs" style="left:22px;top:175px;width:61px;height:25px;box-sizing:border-box;background:#fff;border:1px solid #b4b4b0;border-radius:3.5px;"></div>
 <div class="abs" style="left:68px;top:176px;width:14px;height:23px;background:#f4f4f2;border-left:1px solid #dadad6;border-radius:0 3px 3px 0;"></div>
 <div class="abs" style="left:69px;top:187px;width:13px;height:1px;background:#dadad6;"></div>
 <svg class="abs" style="left:69px;top:176px" width="14" height="23" viewBox="0 0 14 23"><path d="M4,7.500 L7,4.500 L10,7.500 M4,15 L7,18 L10,15" fill="none" stroke="#b2b2ae" stroke-width="1.800"/></svg>
 <div class="txt" style="left:26px;top:181px;">0</div>
 <!-- button -->
 <div class="btn" style="left:85px;top:172px;width:76px;height:32px;background:linear-gradient(#f6f6f6,#dcdcdc);"><span class="txt" style="left:28px;top:8px;">button</span>
  <svg class="abs" style="left:4px;top:4px" width="24" height="24" viewBox="0 0 24 24"><defs><radialGradient id="mg" cx="0.4" cy="0.35" r="0.7"><stop offset="0" stop-color="#fff"/><stop offset="1" stop-color="#cfd4e0"/></radialGradient></defs>
   <path d="M14.500,15 L20,21" stroke="#2e3436" stroke-width="3.800" stroke-linecap="round"/>
   <circle cx="9.300" cy="9" r="7.300" fill="url(#mg)" stroke="#3a4da0" stroke-width="2.800"/><circle cx="9.300" cy="9" r="8.600" fill="none" stroke="#6a7cc4" stroke-width="0.600"/>
  </svg>
 </div>
 <!-- progress -->
 <div class="abs" style="left:172px;top:104px;width:156px;height:22px;box-sizing:border-box;border:1px solid #a4a6a2;border-radius:3.5px;background:linear-gradient(#a8aaa6,#d2d3d0 60%,#dededc);"></div>
 <div class="abs" style="left:172px;top:104px;width:93px;height:22px;box-sizing:border-box;border:1px solid #2b67b0;border-radius:3.5px;background:linear-gradient(#74a7e4,#3c83d8 45%,#2c74d0 55%,#2f78d4);"></div>
 <div class="txt" style="left:233px;top:107px;">60 %</div>
 <div class="txt" style="left:171px;top:127px;">0.0</div>
 <div class="abs" style="left:180px;top:152px;width:147px;height:4px;border-radius:2px;background:linear-gradient(#c4c4c2,#dcdcda);"></div>
 <div class="abs" style="left:173px;top:146px;width:15px;height:15px;box-sizing:border-box;border:1px solid #8e8e86;border-radius:50%;background:linear-gradient(#fff,#e2e2e0);"></div>
 <div class="abs" style="left:172px;top:164px;width:156px;height:26px;box-sizing:border-box;border:1px solid #bcbcb8;border-radius:3.5px;background:#f4f4f2;"></div>
 <svg class="abs" style="left:309px;top:171px" width="14" height="12" viewBox="0 0 14 12"><path d="M2.500,3.500 L7,8 L11.500,3.500" fill="none" stroke="#a8a8a4" stroke-width="1.900"/></svg>
 <!--/PV-->
 </div></div>
 <div class="txt" style="left:196px;top:370px;">Default font:</div>
 <div class="btn" style="left:291px;top:364px;width:271px;height:26px;"><span class="txt" style="left:106px;top:5px;">Sans</span><span class="txt" style="right:8px;top:5px;">10</span></div>
 <div class="btn" style="left:14px;top:412px;width:83px;height:33px;"><span class="txt" style="left:34px;top:8px;">About</span>
  <svg class="abs" style="left:10px;top:5px" width="22" height="22" viewBox="0 0 22 22"><defs><radialGradient id="stg" cx="0.5" cy="0.45" r="0.5"><stop offset="0" stop-color="#fff6a8"/><stop offset="0.5" stop-color="#ecd94e"/><stop offset="1" stop-color="#d4b814"/></radialGradient></defs>
  <ellipse cx="11" cy="19" rx="5" ry="1.300" fill="#000" fill-opacity="0.18"/>
  <path d="M11,1.500 Q12.300,8.700 20.500,10.500 Q12.300,12.300 11,20 Q9.700,12.300 1.500,10.500 Q9.700,8.700 11,1.500 Z" fill="url(#stg)" stroke="#c4a000" stroke-width="0.900"/></svg></div>
 <div class="btn" style="left:400px;top:412px;width:83px;height:33px;"><span class="txt" style="left:34px;top:8px;">Close</span>
  <svg class="abs" style="left:12px;top:6px" width="20" height="20" viewBox="0 0 20 20">
  <path d="M4.500,4 L14.500,15 M14.500,4 L4.500,15" stroke="#000" stroke-opacity="0.15" stroke-width="4.600" stroke-linecap="round" transform="translate(0.800 1)"/>
  <path d="M4.500,4 L14.500,15 M14.500,4 L4.500,15" stroke="#555753" stroke-width="4.600" stroke-linecap="round"/>
  <path d="M4.500,4 L14.500,15 M14.500,4 L4.500,15" stroke="#9a9d98" stroke-width="3" stroke-linecap="round"/></svg></div>
 <div class="btn" style="left:491px;top:412px;width:83px;height:33px;background:#f4f4f2;border-color:#c6c8c4;"><span class="txt" style="left:33px;top:8px;color:#a7aba7;">Apply</span>
  <svg class="abs" style="left:10px;top:5px" width="22" height="22" viewBox="0 0 22 22"><defs><pattern id="chk" width="2" height="2" patternUnits="userSpaceOnUse"><rect width="2" height="2" fill="#dfe8d4"/><rect width="1" height="1" fill="#5f8f2e"/><rect x="1" y="1" width="1" height="1" fill="#5f8f2e"/></pattern></defs>
  <ellipse cx="9" cy="19.300" rx="5.500" ry="1" fill="#000" fill-opacity="0.08"/>
  <path d="M2,11.500 L4.500,9 L8,12.500 L16.500,1.800 L19.500,4.200 L8.500,18.500 Z" fill="url(#chk)" stroke="#6f9a42" stroke-width="0.500"/></svg></div>
</div>
<!--/WIN-->

<svg class="abs" style="left:884px;top:583px" width="22" height="28" viewBox="884 583 22 28"><path d="M888.500,587 V604 L892.300,600.300 L895,606 L897.600,604.800 L895,599.200 H900.300 Z" fill="#fff" stroke="#000" stroke-width="1.200" stroke-linejoin="miter"/></svg>
<!--PANEL-->
<div id="panel">
<svg class="abs" style="left:0;top:0" width="1600" height="30" viewBox="0 870 1600 30">
 <defs>
  <radialGradient id="pg1" cx="0.45" cy="0.35" r="0.7"><stop offset="0" stop-color="#8fd63c"/><stop offset="0.6" stop-color="#5fb01c"/><stop offset="1" stop-color="#3f8a0e"/></radialGradient>
  <radialGradient id="pff" cx="0.5" cy="0.4" r="0.6"><stop offset="0" stop-color="#2a86d8"/><stop offset="0.7" stop-color="#1a56a8"/><stop offset="1" stop-color="#123a80"/></radialGradient>
  <linearGradient id="pfo" x1="0" y1="0" x2="1" y2="1"><stop offset="0" stop-color="#ffb414"/><stop offset="0.5" stop-color="#f07a12"/><stop offset="1" stop-color="#d8401a"/></linearGradient>
  <radialGradient id="pwarn" cx="0.5" cy="0.85" r="0.9"><stop offset="0" stop-color="#ffe03a"/><stop offset="0.3" stop-color="#ff9a10"/><stop offset="0.7" stop-color="#d84a08"/><stop offset="1" stop-color="#6a2404"/></radialGradient>
  <linearGradient id="pmon" x1="0" y1="0" x2="1" y2="1"><stop offset="0" stop-color="#6a6e70"/><stop offset="0.5" stop-color="#2a2c2e"/><stop offset="1" stop-color="#0e0e0e"/></linearGradient>
  <linearGradient id="pscr" x1="0" y1="0" x2="1" y2="1"><stop offset="0" stop-color="#2a62c0"/><stop offset="1" stop-color="#163e8c"/></linearGradient>
  <linearGradient id="pcab" x1="0" y1="0" x2="0" y2="1"><stop offset="0" stop-color="#f4f4f4"/><stop offset="1" stop-color="#bdbdbd"/></linearGradient>
  <linearGradient id="ptask" x1="0" y1="0" x2="0" y2="1"><stop offset="0" stop-color="#a9aca9"/><stop offset="0.12" stop-color="#b4b6b4"/><stop offset="0.5" stop-color="#c8c9c8"/><stop offset="1" stop-color="#dcdcdc"/></linearGradient>
 </defs>
 <!-- menu -->
 <circle cx="17" cy="885" r="13.700" fill="url(#pg1)" stroke="#4a9a14" stroke-width="1"/>
 <path d="M5,879 Q10,873 20,873.500 Q27,874 30,880 Q22,876 12,877.500 Q8,878 5,879 Z" fill="#fff" fill-opacity="0.55"/>
 <circle cx="20.500" cy="882" r="3.300" fill="#cfe9b0" stroke="#3f8a0e" stroke-width="0.800"/><circle cx="21" cy="881.600" r="1.300" fill="#4a9a14"/>
 <path d="M11,884.500 Q17,890 28,888" fill="none" stroke="#dff0c8" stroke-width="1.400"/>
 <path d="M8,893 Q17,897 27,892 Q18,893.500 8,893 Z" fill="#fff" fill-opacity="0.7"/>
 <!-- cabinet -->
 <rect x="37.500" y="871.500" width="20" height="27" rx="1.500" fill="url(#pcab)" stroke="#9a9a9a" stroke-width="1"/>
 <rect x="39.500" y="875.500" width="16" height="9" fill="#ececec" stroke="#a8a8a8" stroke-width="0.800"/><rect x="39.500" y="887.500" width="16" height="9" fill="#e4e4e4" stroke="#a8a8a8" stroke-width="0.800"/>
 <rect x="44" y="878.500" width="7" height="2.600" fill="#d0d0d0" stroke="#8a8a8a" stroke-width="0.700"/><rect x="44" y="890.500" width="7" height="2.600" fill="#d0d0d0" stroke="#8a8a8a" stroke-width="0.700"/>
 <rect x="38" y="885" width="19" height="1.600" fill="#555"/>
 <!-- firefox -->
 <circle cx="81" cy="884" r="11.500" fill="url(#pff)"/>
 <path d="M67,880 Q66,890 72,895 Q79,900 87,897 Q94,893 94.500,884 Q94.500,878 91,874 Q93,880 91,885 Q89,891 83,892 Q78,892.500 76,889 Q79,890 81,888 Q78,888 76.500,885.500 Q75.500,883 77.500,881.500 Q76,879.500 76.500,877.500 Q73,878 71,881 Q70,878 71.500,875 Q68,877 67,880 Z" fill="url(#pfo)"/>
 <path d="M91,874 Q95,879 94.500,886 Q93,880 90,877 Z" fill="#ffd83a"/>
 <!-- windows icon -->
 <rect x="109.500" y="879.500" width="17" height="16" fill="#e8e8e6" stroke="#a0a0a0" stroke-width="1"/><rect x="110" y="880" width="16" height="3" fill="#3a68b0"/>
 <rect x="102.500" y="874.500" width="17" height="16" fill="#ebebe9" stroke="#a0a0a0" stroke-width="1"/><rect x="103" y="875" width="16" height="3" fill="#3a68b0"/>
 <!-- pager -->
 <rect x="135" y="872" width="46" height="26" fill="#386697"/>
 <rect x="150.500" y="878.500" width="16" height="12" fill="#86b9f3" stroke="#fff" stroke-width="1"/>
 <rect x="182" y="872" width="46" height="26" fill="#a6a6a6"/>
 <!-- task button -->
 <rect x="235.500" y="871.500" width="147" height="27" rx="3" fill="url(#ptask)" stroke="#b2b4b2" stroke-width="1"/>
 <g>
  <rect x="239" y="873" width="5" height="21" fill="#e8d44a"/><rect x="239" y="873" width="5" height="4" fill="#f4ec9a"/><rect x="239" y="886" width="5" height="4" fill="#d8b820"/>
  <path d="M244,888 L250,874 L254.500,876 L247,893 Z" fill="#f09a3a"/><path d="M250,874 L254.500,876 L253,879.500 L248.500,877.500 Z" fill="#f8c080"/>
  <path d="M246,892 L257,879 L260.500,882 L248.500,895.500 Z" fill="#9a6aa8"/><path d="M257,879 L260.500,882 L258,885 L254.500,882 Z" fill="#c8a8d0"/>
  <rect x="244" y="890.500" width="18" height="5.500" fill="#5a84c8"/><path d="M247,890.500v5.500M250,890.500v5.500M253,890.500v5.500M256,890.500v5.500M259,890.500v5.500" stroke="#c0d4f0" stroke-width="1"/>
  <circle cx="241.500" cy="893" r="2" fill="#eee" stroke="#888" stroke-width="0.600"/>
 </g>
 <!-- tray: net err x2 -->
 <g id="neterr">
  <rect x="1347" y="872" width="15.500" height="12.500" fill="url(#pmon)" stroke="#8a8a8a" stroke-width="0.800"/>
  <rect x="1337.500" y="880" width="15.500" height="13" fill="url(#pmon)" stroke="#9a9a9a" stroke-width="0.800"/>
  <rect x="1341" y="893" width="8" height="2.500" fill="#777"/>
  <circle cx="1355" cy="889.300" r="8.400" fill="url(#pwarn)"/>
  <rect x="1353.700" y="883.500" width="2.600" height="7.500" fill="#000"/><rect x="1353.700" y="892.500" width="2.600" height="2.600" fill="#000"/>
 </g>
 <use href="#neterr" x="31" y="0"/>
 <!-- clipboard -->
 <rect x="1402" y="876" width="18" height="19.500" rx="1.500" fill="#e4a95c" stroke="#c4883a" stroke-width="0.800"/>
 <path d="M1407,879 L1408.500,874 H1413.500 L1415,879 Z" fill="#e6e6e4" stroke="#9a9a9a" stroke-width="0.700"/>
 <rect x="1411.500" y="884.500" width="10.500" height="11" fill="#f6f6f6" stroke="#bdbdbd" stroke-width="0.700"/>
 <path d="M1413.500,887.500h6.500M1413.500,889.500h6.500M1413.500,891.500h6.500M1413.500,893.500h4" stroke="#c8c8c8" stroke-width="0.800"/>
 <!-- computers -->
 <rect x="1440" y="872.500" width="17.500" height="13" rx="1" fill="#d4d4d2" stroke="#8a8a8a" stroke-width="0.800"/><rect x="1441.800" y="874" width="14" height="9.500" fill="url(#pscr)"/>
 <rect x="1446" y="886" width="6" height="2.500" fill="#bdbdbd"/>
 <rect x="1431" y="879" width="17.500" height="13" rx="1" fill="#dadad8" stroke="#8a8a8a" stroke-width="0.800"/><rect x="1432.800" y="880.500" width="14" height="9.500" fill="url(#pscr)"/>
 <rect x="1436.500" y="892" width="7" height="2.500" fill="#c4c4c4"/><rect x="1431" y="895" width="18" height="3" rx="1" fill="#e4e4e4" stroke="#a0a0a0" stroke-width="0.600"/>
 <rect x="1450.500" y="889.500" width="9" height="9" fill="#a8a8a6" stroke="#7a7a7a" stroke-width="0.800"/><path d="M1452.500,891.500l5,5M1457.500,891.500l-5,5" stroke="#444" stroke-width="1.400"/>
 <!-- volume -->
 <path d="M1468.500,882 h3.500 l5,-5.500 h1.500 v17 h-1.500 l-5,-5.500 h-3.500 z" fill="#9a9a9a" stroke="#555" stroke-width="0.900"/>
 <path d="M1481,881 q3,4 0,8 M1483.500,878.500 q5,6.500 0,13 M1486,876 q7,9 0,18" fill="none" stroke="#3a6ab4" stroke-width="1.300"/>
 <!-- lock screen -->
 <rect x="1538" y="872.500" width="28.500" height="19.500" rx="1" fill="#e0e0de" stroke="#9a9a98" stroke-width="0.800"/><rect x="1540" y="874.500" width="24.500" height="15.500" fill="#a6a8a4"/>
 <rect x="1549" y="892" width="7" height="3" fill="#c8c8c8"/><rect x="1545" y="895" width="15" height="2.500" rx="1" fill="#e4e4e4" stroke="#aaa" stroke-width="0.500"/>
 <circle cx="1552" cy="881.500" r="6.300" fill="#d8d8d4"/><circle cx="1552" cy="880.500" r="4" fill="#e4c020" stroke="#9a7a0a" stroke-width="0.700"/><rect x="1551.400" y="878.300" width="1.400" height="4" fill="#222"/>
 <!-- logout -->
 <rect x="1571.500" y="870.500" width="28" height="29" rx="1.500" fill="#5aa51c" stroke="#3f8210" stroke-width="1"/>
 <rect x="1577" y="873" width="15.500" height="26" fill="#fff"/>
 <g fill="#6fb83a"><circle cx="1587" cy="876.800" r="2"/><path d="M1580,884 l3.500,-4.500 h4.500 l2.500,3.500 h3 v1.500 h-4 l-1.500,-2 l-2,4 l3.500,3 l-1,6 h-2 l0.500,-5 l-3.500,-2.500 l-2.500,5 h-5 v-2 h3.500 l3,-6.500 l0.800,-2.500 h-1.500 l-2.300,3 z"/></g>
</svg>
 <div class="txt" style="left:264px;top:7px;letter-spacing:0.1px;">Customize Look...</div>
 <div class="txt" style="left:1497px;top:7px;">15:11</div>
</div>
<!--/PANEL-->
</body>
</html>
